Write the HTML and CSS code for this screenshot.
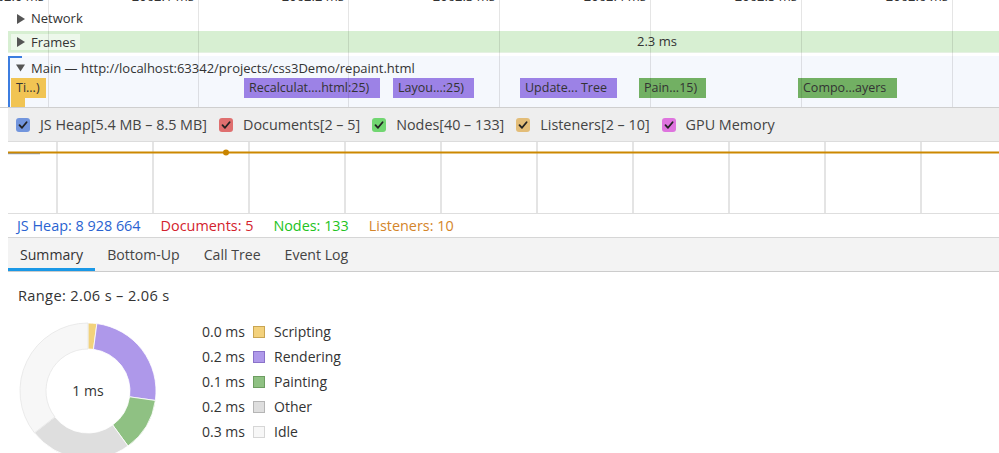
FILE: index.html
```html
<!DOCTYPE html>
<html>
<head>
<meta charset="utf-8">
<link rel="stylesheet" href="styles.css">
</head>
<body>
<div class="timeline">
  <div class="grid">
    <div class="cell first"><span class="tick">2062.0 ms</span></div>
    <div class="cell"><span class="tick">2062.1 ms</span></div>
    <div class="cell"><span class="tick">2062.2 ms</span></div>
    <div class="cell"><span class="tick">2062.3 ms</span></div>
    <div class="cell"><span class="tick">2062.4 ms</span></div>
    <div class="cell"><span class="tick">2062.5 ms</span></div>
    <div class="cell"><span class="tick">2062.6 ms</span></div>
  </div>
  <div class="ruler"></div>
  <div class="track-row network"><svg class="tri" viewBox="0 0 8 10"><path d="M0 0 L8 5 L0 10 Z"/></svg>Network</div>
  <div class="frames">
    <div class="frames-label"><svg class="tri" viewBox="0 0 8 10"><path d="M0 0 L8 5 L0 10 Z"/></svg>Frames</div>
    <div class="frames-time">2.3 ms</div>
  </div>
  <div class="main">
    <div class="main-head"><svg class="tri-down" viewBox="0 0 10 8"><path d="M0 0 L10 0 L5 8 Z"/></svg>Main — http://localhost:63342/projects/css3Demo/repaint.html</div>
    <div class="flame">
      <div class="ev scripting" style="left:1px;width:35px">Ti...)</div>
      <div class="ev rendering" style="left:234px;width:136px">Recalculat....html:25)</div>
      <div class="ev rendering" style="left:383px;width:81px">Layou...:25)</div>
      <div class="ev rendering" style="left:510px;width:97px">Update... Tree</div>
      <div class="ev painting" style="left:629px;width:67px">Pain...15)</div>
      <div class="ev painting" style="left:788px;width:99px">Compo...ayers</div>
    </div>
    <div class="flame2">
      <div class="ev scripting" style="left:1px;width:14px"></div>
    </div>
  </div>
</div>

<div class="counters-bar">
  <label class="cb"><span class="box heap"><svg viewBox="0 0 14 14"><path d="M3.5 7.2 L6 9.8 L10.6 4.2"/></svg></span>JS Heap[5.4 MB – 8.5 MB]</label>
  <label class="cb"><span class="box docs"><svg viewBox="0 0 14 14"><path d="M3.5 7.2 L6 9.8 L10.6 4.2"/></svg></span>Documents[2 – 5]</label>
  <label class="cb"><span class="box nodes"><svg viewBox="0 0 14 14"><path d="M3.5 7.2 L6 9.8 L10.6 4.2"/></svg></span>Nodes[40 – 133]</label>
  <label class="cb"><span class="box listeners"><svg viewBox="0 0 14 14"><path d="M3.5 7.2 L6 9.8 L10.6 4.2"/></svg></span>Listeners[2 – 10]</label>
  <label class="cb"><span class="box gpu"><svg viewBox="0 0 14 14"><path d="M3.5 7.2 L6 9.8 L10.6 4.2"/></svg></span>GPU Memory</label>
</div>

<div class="graph">
  <svg class="graph-svg" viewBox="0 0 991 71" preserveAspectRatio="none">
    <line x1="0" y1="11.5" x2="32" y2="11.5" stroke="#8aa6d8" stroke-width="1.5"/>
    <line x1="0" y1="10.5" x2="991" y2="10.5" stroke="#cc8800" stroke-width="2"/>
    <circle cx="218" cy="10.5" r="3" fill="#c98500"/>
  </svg>
</div>

<div class="values">
  <span class="v heap">JS Heap: 8 928 664</span>
  <span class="v docs">Documents: 5</span>
  <span class="v nodes">Nodes: 133</span>
  <span class="v listeners">Listeners: 10</span>
</div>

<div class="tabs">
  <div class="tab active">Summary</div>
  <div class="tab">Bottom-Up</div>
  <div class="tab">Call Tree</div>
  <div class="tab">Event Log</div>
</div>

<div class="summary">
  <div class="range">Range: 2.06 s – 2.06 s</div>
  <div class="pie-row">
    <svg class="pie" viewBox="0 0 140 140" width="140" height="140">
      <path class="s-script" d="M70 2 A68 68 0 0 1 78.88 2.58 L75.48 28.36 A42 42 0 0 0 70 28 Z"/>
      <path class="s-render" d="M78.88 2.58 A68 68 0 0 1 137.34 79.47 L111.59 75.85 A42 42 0 0 0 75.48 28.36 Z"/>
      <path class="s-paint" d="M137.34 79.47 A68 68 0 0 1 109.97 125.01 L94.69 103.98 A42 42 0 0 0 111.59 75.85 Z"/>
      <path class="s-other" d="M109.97 125.01 A68 68 0 0 1 16.42 111.87 L36.90 95.86 A42 42 0 0 0 94.69 103.98 Z"/>
      <path class="s-idle" d="M16.42 111.87 A68 68 0 0 1 70 2 L70 28 A42 42 0 0 0 36.90 95.86 Z"/>
      <text x="70" y="75" text-anchor="middle" class="pie-total">1 ms</text>
    </svg>
    <div class="legend">
      <div class="lg"><span class="ms">0.0 ms</span><span class="sw sw-script"></span>Scripting</div>
      <div class="lg"><span class="ms">0.2 ms</span><span class="sw sw-render"></span>Rendering</div>
      <div class="lg"><span class="ms">0.1 ms</span><span class="sw sw-paint"></span>Painting</div>
      <div class="lg"><span class="ms">0.2 ms</span><span class="sw sw-other"></span>Other</div>
      <div class="lg"><span class="ms">0.3 ms</span><span class="sw sw-idle"></span>Idle</div>
    </div>
  </div>
</div>
</body>
</html>
```

FILE: styles.css
```css
html, body {
  margin: 0;
  padding: 0;
  background: #fff;
  overflow: hidden;
}
body {
  width: 999px;
  height: 453px;
  font-family: "Open Sans", "Noto Sans", sans-serif;
  color: #333;
  font-size: 13px;
}

/* ---------- timeline ---------- */
.timeline {
  position: relative;
  height: 107px;
  border-bottom: 1px solid #cfcfcf;
  overflow: hidden;
}
.grid {
  position: absolute;
  top: 0;
  left: 0;
  right: 0;
  bottom: 0;
  display: flex;
  z-index: 2;
  pointer-events: none;
}
.cell {
  flex: 0 0 150px;
  border-right: 1px solid rgba(0,0,0,0.1);
  box-sizing: border-box;
  position: relative;
  overflow: hidden;
}
.cell.first { flex-basis: 49px; }
.cell:nth-child(4), .cell:nth-child(5), .cell:nth-child(6), .cell:nth-child(7) { flex-basis: 151px; }
.tick {
  position: absolute;
  right: 4px;
  top: -13px;
  font-size: 13px;
  color: #333;
  white-space: nowrap;
}
.ruler { height: 9px; }
.track-row {
  height: 19px;
  line-height: 19px;
  padding-left: 17px;
  font-size: 13px;
  display: flex;
  align-items: center;
}
.tri {
  width: 8px;
  height: 10px;
  fill: #555;
  margin-right: 6px;
  flex: none;
}
.tri-down {
  width: 9px;
  height: 8px;
  fill: #555;
  margin-right: 6px;
  flex: none;
}
.frames {
  margin: 3px 0 0 8px;
  height: 21px;
  background: #d7efd2;
  border-bottom: 1px solid #e5f1e2;
  position: relative;
  display: flex;
  align-items: center;
}
.frames-label {
  margin-left: 3px;
  height: 16px;
  line-height: 16px;
  padding: 0 4px 0 6px;
  background: rgba(255,255,255,0.55);
  font-size: 13px;
  display: flex;
  align-items: center;
}
.frames-time {
  position: absolute;
  left: 629px;
  top: 0;
  line-height: 21px;
  font-size: 13px;
  color: #333;
}
.main {
  margin: 3px 0 0 8px;
  height: 51px;
  background: #f5f8fd;
  border-left: 2px solid #3c7de0;
  position: relative;
}
.main::before {
  content: "";
  position: absolute;
  left: 0;
  top: 0;
  width: 12px;
  height: 2px;
  background: #3c7de0;
}
.main-head {
  height: 21px;
  padding-left: 6px;
  padding-top: 2px;
  box-sizing: border-box;
  font-size: 13px;
  display: flex;
  align-items: center;
}
.flame, .flame2 {
  position: relative;
}
.flame { height: 20px; margin-top: 1px; }
.flame2 { height: 9px; }
.ev {
  position: absolute;
  top: 0;
  bottom: 0;
  box-sizing: border-box;
  padding-left: 5px;
  font-size: 12.5px;
  line-height: 20px;
  color: #333;
  white-space: nowrap;
  overflow: hidden;
}
.scripting { background: #f1c453; }
.rendering { background: #9c82e6; }
.painting { background: #72b063; }

/* ---------- counters bar ---------- */
.counters-bar {
  margin-left: 8px;
  height: 33px;
  background: #eeeeee;
  border-bottom: 1px solid #dcdcdc;
  display: flex;
  align-items: center;
  padding-left: 8px;
  gap: 12px;
  font-size: 14.35px;
  color: #444;
}
.cb {
  display: flex;
  align-items: center;
  white-space: nowrap;
}
.box {
  width: 14px;
  height: 14px;
  border-radius: 3px;
  margin-right: 10px;
  display: inline-flex;
}
.box svg {
  width: 14px;
  height: 14px;
}
.box path {
  fill: none;
  stroke: #222;
  stroke-width: 1.8;
  stroke-linecap: round;
  stroke-linejoin: round;
}
.box.heap { background: #7295dd; }
.box.docs { background: #df6f6f; }
.box.nodes { background: #71d671; }
.box.listeners { background: #e3bd78; }
.box.gpu { background: #de74de; }

/* ---------- graph ---------- */
.graph {
  margin-left: 8px;
  height: 71px;
  border-bottom: 1px solid #dedede;
  position: relative;
  background-image: linear-gradient(to right, #e4e4e4 0, #e4e4e4 2px, transparent 2px);
  background-size: 96px 100%;
  background-position: 48px 0;
}
.graph-svg {
  position: absolute;
  left: 0;
  top: 0;
  width: 991px;
  height: 71px;
}

/* ---------- values ---------- */
.values {
  margin-left: 8px;
  height: 23px;
  border-bottom: 1px solid #d6d6d6;
  display: flex;
  align-items: center;
  padding-left: 9px;
  gap: 20px;
  font-size: 14.4px;
}
.v.heap { color: #2a63d1; }
.v.docs { color: #d3222c; }
.v.nodes { color: #22c322; }
.v.listeners { color: #d4852a; }

/* ---------- tabs ---------- */
.tabs {
  margin-left: 8px;
  height: 33px;
  background: #f3f3f3;
  border-bottom: 1px solid #cccccc;
  display: flex;
  font-size: 14.1px;
  color: #444;
}
.tab {
  padding: 0 12px;
  line-height: 33px;
  position: relative;
}
.tab.active { color: #333; }
.tab.active::after {
  content: "";
  position: absolute;
  left: 0;
  right: 0;
  bottom: 0;
  height: 3px;
  background: #1a98e6;
}

/* ---------- summary ---------- */
.summary {
  padding: 13px 0 0 18px;
  font-size: 14px;
  color: #333;
}
.range {
  line-height: 20px;
  font-size: 14.6px;
  letter-spacing: 0.35px;
}
.pie-row {
  display: flex;
  margin-top: 16px;
}
.pie {
  flex: 0 0 140px;
  margin-left: 0;
}
.pie path { stroke: #fff; stroke-width: 0.8; }
.s-script { fill: #f2d27c; }
.s-render { fill: #ae98ea; }
.s-paint { fill: #8fc183; }
.s-other { fill: #dedede; }
.s-idle { fill: #f7f7f7; stroke: #e6e6e6 !important; }
.pie-total {
  font-family: "Open Sans", "Noto Sans", sans-serif;
  font-size: 14px;
  fill: #333;
}
.legend {
  margin-left: 44px;
  margin-top: -2px;
}
.lg {
  height: 25px;
  display: flex;
  align-items: center;
  white-space: nowrap;
}
.ms { width: 51px; }
.sw {
  width: 10px;
  height: 10px;
  border: 1px solid;
  margin-right: 9px;
}
.sw-script { background: #f3d17c; border-color: #c9a552; }
.sw-render { background: #af99ea; border-color: #8a72c9; }
.sw-paint { background: #8fc183; border-color: #6d9d61; }
.sw-other { background: #dedede; border-color: #b5b5b5; }
.sw-idle { background: #f7f7f7; border-color: #d6d6d6; }
```
